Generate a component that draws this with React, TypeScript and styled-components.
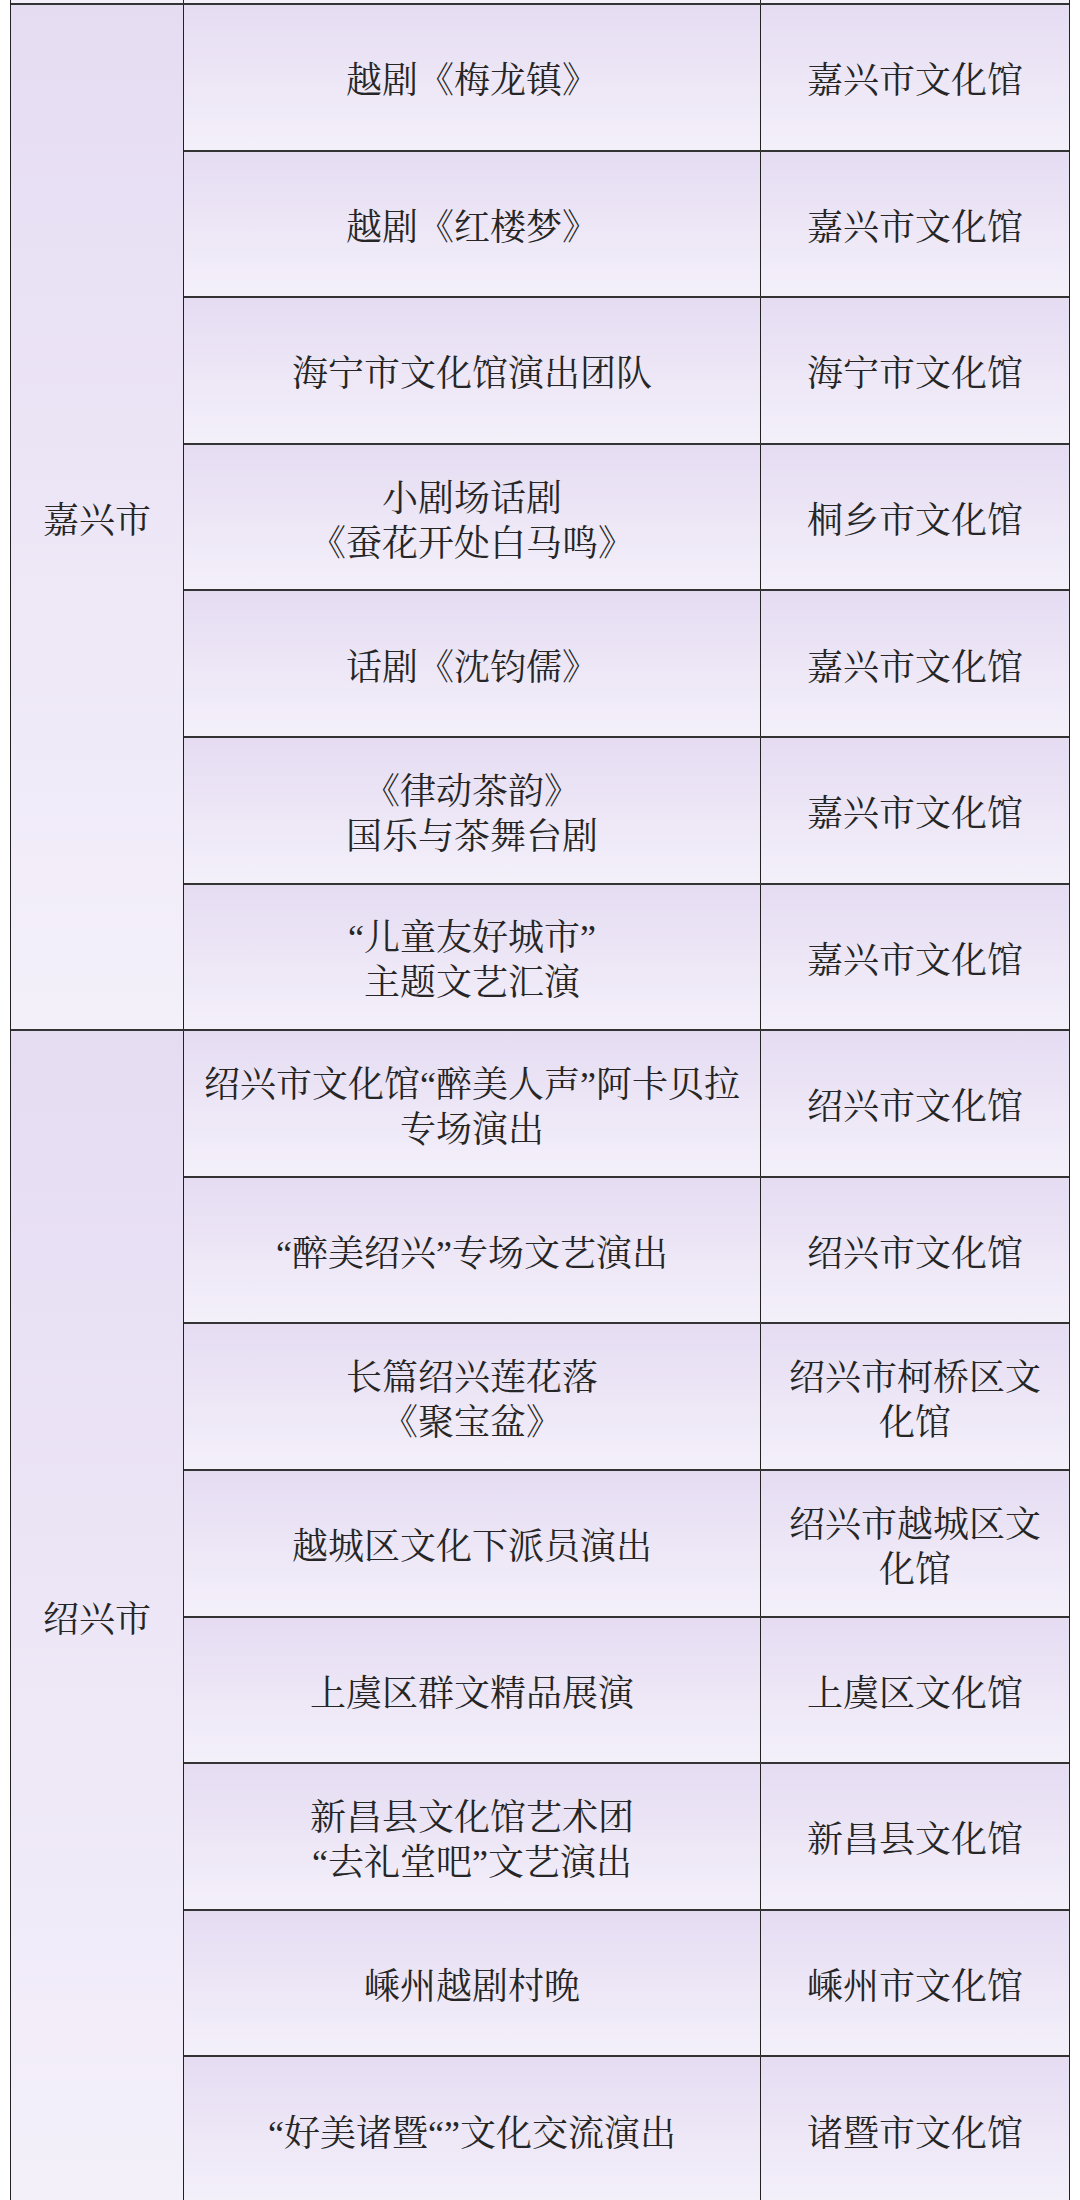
import React from 'react';
import styled, { createGlobalStyle } from 'styled-components';

const GlobalStyle = createGlobalStyle`
  html, body {
    margin: 0;
    padding: 0;
    background: #ffffff;
  }
  body {
    font-family: "Liberation Serif", "Noto Serif CJK SC", "Noto Sans CJK SC", serif;
  }
`;

type Show = {
  title: string[];
  venue: string[];
};

type Region = {
  city: string;
  shows: Show[];
};

const regions: Region[] = [
  {
    city: '嘉兴市',
    shows: [
      { title: ['越剧《梅龙镇》'], venue: ['嘉兴市文化馆'] },
      { title: ['越剧《红楼梦》'], venue: ['嘉兴市文化馆'] },
      { title: ['海宁市文化馆演出团队'], venue: ['海宁市文化馆'] },
      { title: ['小剧场话剧', '《蚕花开处白马鸣》'], venue: ['桐乡市文化馆'] },
      { title: ['话剧《沈钧儒》'], venue: ['嘉兴市文化馆'] },
      { title: ['《律动茶韵》', '国乐与茶舞台剧'], venue: ['嘉兴市文化馆'] },
      { title: ['“儿童友好城市”', '主题文艺汇演'], venue: ['嘉兴市文化馆'] },
    ],
  },
  {
    city: '绍兴市',
    shows: [
      { title: ['绍兴市文化馆“醉美人声”阿卡贝拉', '专场演出'], venue: ['绍兴市文化馆'] },
      { title: ['“醉美绍兴”专场文艺演出'], venue: ['绍兴市文化馆'] },
      { title: ['长篇绍兴莲花落', '《聚宝盆》'], venue: ['绍兴市柯桥区文', '化馆'] },
      { title: ['越城区文化下派员演出'], venue: ['绍兴市越城区文', '化馆'] },
      { title: ['上虞区群文精品展演'], venue: ['上虞区文化馆'] },
      { title: ['新昌县文化馆艺术团', '“去礼堂吧”文艺演出'], venue: ['新昌县文化馆'] },
      { title: ['嵊州越剧村晚'], venue: ['嵊州市文化馆'] },
      { title: ['“好美诸暨“”文化交流演出'], venue: ['诸暨市文化馆'] },
    ],
  },
];

const ROW_HEIGHT = 146.6;
const cellFill = 'linear-gradient(180deg, #e5dcf2 0%, #f4f0fa 100%)';

const Page = styled.div`
  height: 2200px;
  overflow: hidden;
  padding-left: 10px;
`;

const Table = styled.div`
  width: 1058px;
  border-left: 1px solid #222;
  border-right: 1px solid #222;
  color: #262626;
  font-size: 36px;
  line-height: 45px;
`;

const Columns = styled.div`
  display: grid;
  grid-template-columns: 172px 576px 308px;
  column-gap: 1px;
  background: #222;
`;

const Stub = styled(Columns)`
  height: 3px;
  border-bottom: 2px solid #333;

  & > div {
    background: #f4f0fa;
  }
`;

const Group = styled(Columns)`
  border-bottom: 2px solid #333;
`;

const CityCell = styled.div`
  display: flex;
  align-items: center;
  justify-content: center;
  background: ${cellFill};
  padding-top: 8px;
`;

const Rows = styled.div`
  grid-column: 2 / 4;
  display: flex;
  flex-direction: column;
`;

const Row = styled(Columns)<{ $last: boolean }>`
  grid-template-columns: 576px 308px;
  box-sizing: border-box;
  border-bottom: ${(p) => (p.$last ? 'none' : '2px solid #333')};
  height: ${(p) => (p.$last ? ROW_HEIGHT - 2 : ROW_HEIGHT)}px;
`;

const Cell = styled.div`
  display: flex;
  flex-direction: column;
  align-items: center;
  justify-content: center;
  text-align: center;
  background: ${cellFill};
  padding-top: 9px;
`;

const Line = styled.span`
  display: block;
  height: 45px;
  white-space: nowrap;
`;

export default function App() {
  return (
    <>
      <GlobalStyle />
      <Page>
        <Table>
          <Stub>
            <div />
            <div />
            <div />
          </Stub>
          {regions.map((region) => (
            <Group key={region.city}>
              <CityCell>{region.city}</CityCell>
              <Rows>
                {region.shows.map((show, i) => (
                  <Row key={i} $last={i === region.shows.length - 1}>
                    <Cell>
                      {show.title.map((t) => (
                        <Line key={t}>{t}</Line>
                      ))}
                    </Cell>
                    <Cell>
                      {show.venue.map((v) => (
                        <Line key={v}>{v}</Line>
                      ))}
                    </Cell>
                  </Row>
                ))}
              </Rows>
            </Group>
          ))}
        </Table>
      </Page>
    </>
  );
}
